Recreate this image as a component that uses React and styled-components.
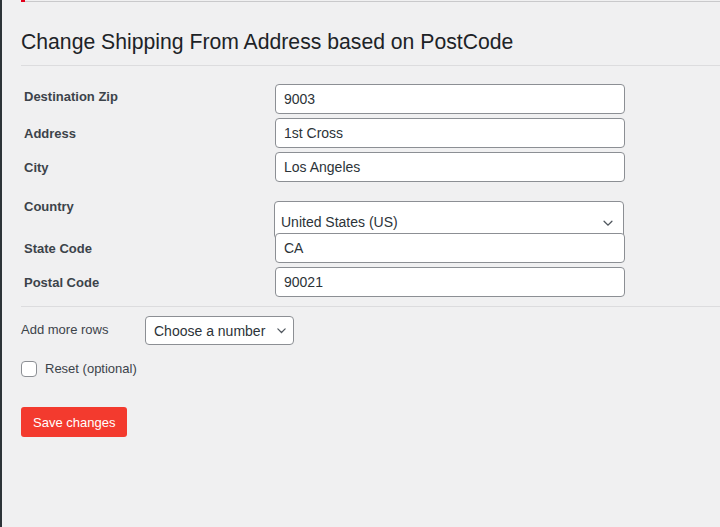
import React from 'react';
import styled, {createGlobalStyle} from 'styled-components';

const GlobalStyle = createGlobalStyle`
	html, body {
		margin: 0;
		padding: 0;
		background: #f0f0f1;
		font-family: "Liberation Sans", Arial, sans-serif;
		color: #3c434a;
	}
`;

const Page = styled.div`
	display: flex;
	min-height: 527px;
	background: #f0f0f1;
`;

const MenuEdge = styled.div`
	width: 2px;
	flex-shrink: 0;
	background: #2c3338;
`;

const Content = styled.div`
	flex: 1;
	padding-left: 19px;
	display: flex;
	flex-direction: column;
`;

const NoticeEdge = styled.div`
	display: flex;
	height: 2px;
`;

const NoticeMark = styled.div`
	width: 4px;
	background: #e3001b;
`;

const NoticeLine = styled.div`
	flex: 1;
	border-bottom: 1px solid #c9c9cb;
`;

const Title = styled.h1`
	margin: 27px 0 0;
	font-size: 21.2px;
	font-weight: 400;
	line-height: 26px;
	color: #1d2327;
`;

const Divider = styled.div`
	height: 1px;
	background: #dcdcde;
	margin-top: ${p => p.top}px;
`;

const FormTable = styled.div`
	display: flex;
	flex-direction: column;
	margin-top: 16px;
`;

const Row = styled.div`
	display: flex;
	align-items: flex-start;
	height: ${p => p.height || 34}px;
`;

const Label = styled.label`
	width: 251px;
	padding-left: 3px;
	padding-top: ${p => p.offset ?? 3}px;
	font-size: 13px;
	font-weight: 700;
	line-height: 30px;
	color: #3c434a;
	flex-shrink: 0;
`;

const TextInput = styled.input`
	box-sizing: border-box;
	width: 350px;
	height: 30px;
	margin-top: 2px;
	padding: 0 8px;
	border: 1px solid #8c8f94;
	border-radius: 4px;
	background: #fff;
	font-family: "Liberation Sans", Arial, sans-serif;
	font-size: 14px;
	color: #2c3338;
	position: relative;
`;

const SelectBox = styled.div`
	box-sizing: border-box;
	position: relative;
	display: flex;
	align-items: ${p => p.tall ? 'flex-end' : 'center'};
	justify-content: space-between;
	width: ${p => p.width}px;
	height: ${p => p.height}px;
	margin-top: ${p => p.top || 0}px;
	margin-left: ${p => p.left || 0}px;
	padding: ${p => p.tall ? '0 8px 8px 6px' : '0 5px 0 8px'};
	border: 1px solid #8c8f94;
	border-radius: 4px;
	background: #fff;
	font-size: 14px;
	color: #2c3338;
`;

const Chevron = ({size = 14}) => (
	<svg width={size} height={size} viewBox="0 0 16 16" fill="none">
		<path d="M3.5 6l4.5 4.5L12.5 6" stroke="#50575e" strokeWidth="1.5" strokeLinecap="round"/>
	</svg>
);

const OptionRow = styled.div`
	display: flex;
	align-items: center;
	margin-top: ${p => p.top}px;
	font-size: 13px;
	color: #3c434a;
`;

const OptionLabel = styled.span`
	width: 124px;
	margin-top: -3px;
`;

const CheckBox = styled.span`
	box-sizing: border-box;
	width: 16px;
	height: 16px;
	border: 1px solid #8c8f94;
	border-radius: 4px;
	background: #fff;
	margin-right: 8px;
`;

const CheckText = styled.span`
	margin-top: -1px;
`;

const SaveButton = styled.button`
	align-self: flex-start;
	margin-top: 30px;
	height: 30px;
	padding: 0 12px;
	border: none;
	border-radius: 3px;
	background: #f33a2e;
	color: #fff;
	font-family: "Liberation Sans", Arial, sans-serif;
	font-size: 13px;
`;

const fields = [
	{label: 'Destination Zip', value: '9003', offset: 0},
	{label: 'Address', value: '1st Cross'},
	{label: 'City', value: 'Los Angeles'}
];

export default function App() {
	return (
		<Page>
			<GlobalStyle/>
			<MenuEdge/>
			<Content>
				<NoticeEdge>
					<NoticeMark/>
					<NoticeLine/>
				</NoticeEdge>
				<Title>Change Shipping From Address based on PostCode</Title>
				<Divider top={10}/>
				<FormTable>
					{fields.map(f => (
						<Row key={f.label}>
							<Label offset={f.offset}>{f.label}</Label>
							<TextInput defaultValue={f.value}/>
						</Row>
					))}
					<Row height={47}>
						<Label offset={8}>Country</Label>
						<SelectBox tall width={350} height={38} top={17} left={-1}>
							<span>United States (US)</span>
							<Chevron/>
						</SelectBox>
					</Row>
					<Row>
						<Label>State Code</Label>
						<TextInput defaultValue="CA"/>
					</Row>
					<Row>
						<Label>Postal Code</Label>
						<TextInput defaultValue="90021"/>
					</Row>
				</FormTable>
				<Divider top={7}/>
				<OptionRow top={9}>
					<OptionLabel>Add more rows</OptionLabel>
					<SelectBox width={149} height={29}>
						<span>Choose a number</span>
						<Chevron size={13}/>
					</SelectBox>
				</OptionRow>
				<OptionRow top={16}>
					<CheckBox/>
					<CheckText>Reset (optional)</CheckText>
				</OptionRow>
				<SaveButton>Save changes</SaveButton>
			</Content>
		</Page>
	);
}
